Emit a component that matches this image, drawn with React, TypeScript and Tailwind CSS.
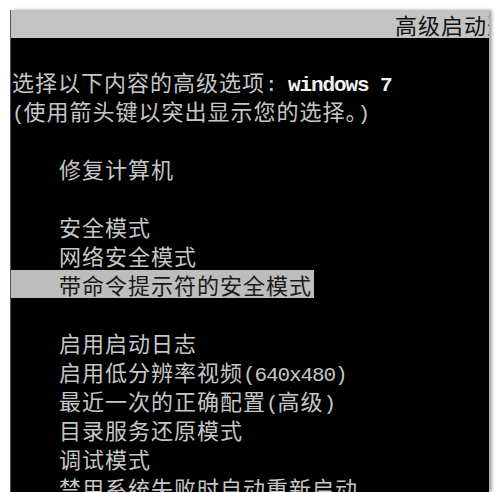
import React from "react";

const cjk = "font-['Noto_Sans_CJK_SC',sans-serif] text-[22px] tracking-[1px]";
const mono = "font-['Liberation_Mono','Noto_Sans_CJK_SC',monospace] text-[21px] tracking-[-1.1px]";

// split a console line into half-width (mono) and full-width (CJK) runs
function ConsoleText({ text, bright }: { text: string; bright?: boolean }) {
  const runs = text.match(/[\x00-\x7f]+|[^\x00-\x7f]+/g) ?? [];
  return (
    <>
      {runs.map((r, i) =>
        /^[\x00-\x7f]+$/.test(r) ? (
          <span key={i} className={`${mono} whitespace-pre ${bright ? "font-bold text-[#f2f2f2]" : ""}`}>
            {r}
          </span>
        ) : (
          <span key={i} className={cjk}>
            {r}
          </span>
        )
      )}
    </>
  );
}

function Line({ children, indent }: { children?: React.ReactNode; indent?: boolean }) {
  return (
    <div className={`h-[29px] leading-[29px] whitespace-nowrap ${indent ? "pl-[48px]" : "pl-[1px]"}`}>
      {children}
    </div>
  );
}

const group1 = ["安全模式", "网络安全模式"];
const group2 = [
  "启用启动日志",
  "启用低分辨率视频(640x480)",
  "最近一次的正确配置(高级)",
  "目录服务还原模式",
  "调试模式",
  "禁用系统失败时自动重新启动",
];

export default function App() {
  return (
    <div className="w-[500px] h-[492px] bg-white overflow-hidden pt-[10px] pl-[10px] pr-[11px]">
      <div className="h-full flex flex-col border-l border-[#555] shadow-[3px_0_3px_rgba(0,0,0,0.35)]">
        <div className="h-[28px] shrink-0 bg-[#c3c3c3] overflow-hidden whitespace-nowrap pl-[384px] leading-[28px] text-[#111]">
          <span className="font-['Noto_Sans_CJK_SC',sans-serif] text-[22px] tracking-[1px]">高级启动选项</span>
        </div>
        <div className="flex-1 bg-black text-[#c6c6c6] overflow-hidden">
          <Line />
          <Line>
            <ConsoleText text="选择以下内容的高级选项:" />
            <ConsoleText text=" windows 7" bright />
          </Line>
          <Line>
            <ConsoleText text="(使用箭头键以突出显示您的选择。)" />
          </Line>
          <Line />
          <Line indent>
            <ConsoleText text="修复计算机" />
          </Line>
          <Line />
          {group1.map((t) => (
            <Line indent key={t}>
              <ConsoleText text={t} />
            </Line>
          ))}
          <div className="h-[29px] leading-[29px] whitespace-nowrap">
            <span className="inline-block h-[28px] bg-[#bdbdbd] text-[#1a1a1a] pl-[48px] pr-[2px]">
              <ConsoleText text="带命令提示符的安全模式" />
            </span>
          </div>
          <Line />
          {group2.map((t) => (
            <Line indent key={t}>
              <ConsoleText text={t} />
            </Line>
          ))}
        </div>
      </div>
    </div>
  );
}
